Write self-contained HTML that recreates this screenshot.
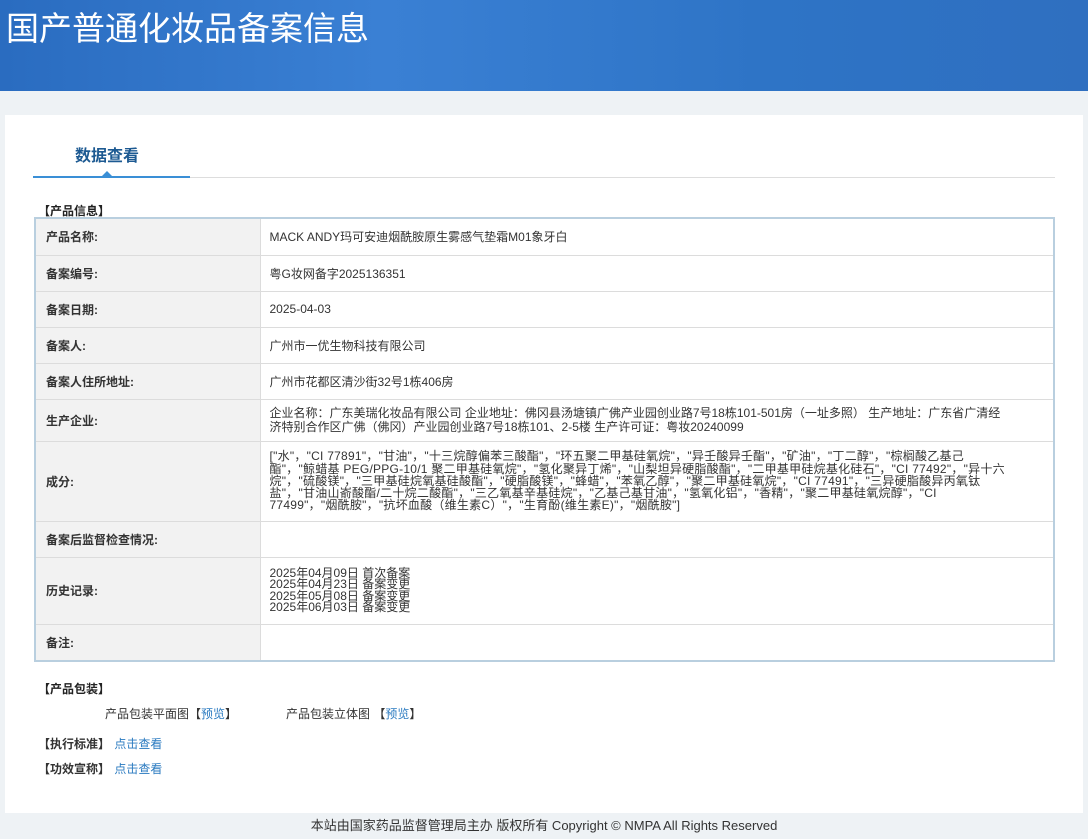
<!DOCTYPE html>
<html><head><meta charset="utf-8"><style>
*{margin:0;padding:0;box-sizing:border-box}
body{width:1088px;height:839px;background:#eef2f5;font-family:"Liberation Sans","Noto Sans CJK SC",sans-serif;font-size:12px;color:#333;position:relative;overflow:hidden}
.hdr{position:absolute;left:0;top:0;width:1088px;height:91px;background:linear-gradient(90deg,#2a6cc0 0%,#3a80d4 35%,#2e74c6 70%,#2f6fc0 100%)}
.hdr h1{position:absolute;left:6px;top:2px;font-size:33px;font-weight:normal;color:#fff}
.main{position:absolute;left:5px;top:115px;width:1078px;height:698px;background:#fff}
.tab{position:absolute;left:75px;top:142px;font-size:16px;font-weight:bold;color:#1d5a92}
.tabline{position:absolute;left:33px;top:177px;width:1022px;height:1px;background:#ddd}
.tabact{position:absolute;left:33px;top:176px;width:157px;height:2px;background:#3a8fd6}
.tri{position:absolute;left:101px;top:171px;width:0;height:0;border-left:6px solid transparent;border-right:6px solid transparent;border-bottom:6px solid #3a8fd6}
.sec{position:absolute;font-weight:bold;color:#222;font-size:12px}
table{position:absolute;left:34px;top:217px;width:1021px;border-collapse:collapse;border:2px solid #b9cfdf}
td{border:1px solid #dcdcdc;vertical-align:middle;font-size:12px}
td.l{width:225px;background:#f2f2f2;font-weight:bold;padding-left:10px;color:#333}
td.v{padding-left:9px;color:#333}
.ing{line-height:12.3px;letter-spacing:0.25px}
.a{color:#2a7ac0}
.foot{position:absolute;top:815px;left:0;width:1088px;text-align:center;font-size:13px;color:#333}
</style></head><body>
<div class="hdr"><h1>国产普通化妆品备案信息</h1></div>
<div class="main"></div>
<div class="tab">数据查看</div>
<div class="tabline"></div><div class="tabact"></div><div class="tri"></div>
<div class="sec" style="left:38px;top:202px">【产品信息】</div>
<table>
<tr style="height:37px"><td class="l">产品名称:</td><td class="v">MACK ANDY玛可安迪烟酰胺原生雾感气垫霜M01象牙白</td></tr>
<tr style="height:36px"><td class="l">备案编号:</td><td class="v">粤G妆网备字2025136351</td></tr>
<tr style="height:36px"><td class="l">备案日期:</td><td class="v">2025-04-03</td></tr>
<tr style="height:36px"><td class="l">备案人:</td><td class="v">广州市一优生物科技有限公司</td></tr>
<tr style="height:36px"><td class="l">备案人住所地址:</td><td class="v">广州市花都区清沙街32号1栋406房</td></tr>
<tr style="height:42px"><td class="l">生产企业:</td><td class="v" style="line-height:14px">企业名称：广东美瑞化妆品有限公司 企业地址：佛冈县汤塘镇广佛产业园创业路7号18栋101-501房（一址多照） 生产地址：广东省广清经<br>济特别合作区广佛（佛冈）产业园创业路7号18栋101、2-5楼 生产许可证：粤妆20240099</td></tr>
<tr style="height:80px"><td class="l">成分:</td><td class="v ing">["水"，"CI 77891"，"甘油"，"十三烷醇偏苯三酸酯"，"环五聚二甲基硅氧烷"，"异壬酸异壬酯"，"矿油"，"丁二醇"，"棕榈酸乙基己<br>酯"，"鲸蜡基 PEG/PPG-10/1 聚二甲基硅氧烷"，"氢化聚异丁烯"，"山梨坦异硬脂酸酯"，"二甲基甲硅烷基化硅石"，"CI 77492"，"异十六<br>烷"，"硫酸镁"，"三甲基硅烷氧基硅酸酯"，"硬脂酸镁"，"蜂蜡"，"苯氧乙醇"，"聚二甲基硅氧烷"，"CI 77491"，"三异硬脂酸异丙氧钛<br>盐"，"甘油山嵛酸酯/二十烷二酸酯"，"三乙氧基辛基硅烷"，"乙基己基甘油"，"氢氧化铝"，"香精"，"聚二甲基硅氧烷醇"，"CI<br>77499"，"烟酰胺"，"抗坏血酸（维生素C）"，"生育酚(维生素E)"，"烟酰胺"]</td></tr>
<tr style="height:36px"><td class="l">备案后监督检查情况:</td><td class="v"></td></tr>
<tr style="height:67px"><td class="l">历史记录:</td><td class="v" style="line-height:11.3px">2025年04月09日 首次备案<br>2025年04月23日 备案变更<br>2025年05月08日 备案变更<br>2025年06月03日 备案变更</td></tr>
<tr style="height:37px"><td class="l">备注:</td><td class="v"></td></tr>
</table>
<div class="sec" style="left:38px;top:680px">【产品包装】</div>
<div style="position:absolute;left:105px;top:705px">产品包装平面图【<span class="a">预览</span>】</div>
<div style="position:absolute;left:286px;top:705px">产品包装立体图 【<span class="a">预览</span>】</div>
<div style="position:absolute;left:38px;top:735px"><b>【执行标准】</b> <span class="a" style="margin-left:1px">点击查看</span></div>
<div style="position:absolute;left:38px;top:760px"><b>【功效宣称】</b> <span class="a" style="margin-left:1px">点击查看</span></div>
<div class="foot">本站由国家药品监督管理局主办 版权所有 Copyright © NMPA All Rights Reserved</div>
</body></html>
